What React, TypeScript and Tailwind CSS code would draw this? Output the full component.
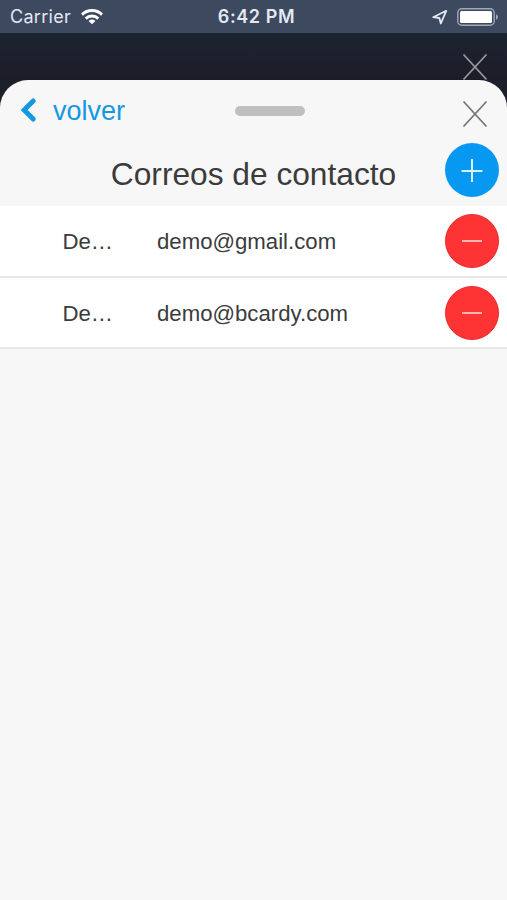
interface Contact {
  label: string;
  email: string;
}

const contacts: Contact[] = [
  { label: "De…", email: "demo@gmail.com" },
  { label: "De…", email: "demo@bcardy.com" },
];

function CloseIcon({ className }: { className: string }) {
  return (
    <svg viewBox="0 0 26 28" className={`h-7 w-[26px] ${className}`} fill="none" stroke="currentColor" strokeWidth="1.8">
      <path d="M1.5 1.5 24.5 26.5M24.5 1.5 1.5 26.5" />
    </svg>
  );
}

function StatusBar() {
  return (
    <header className="grid h-[33px] grid-cols-3 items-center bg-[#3c495f] pr-2 pl-[10px] font-['Inter',sans-serif] text-[#e3e8f2]">
      <div className="flex items-center gap-[10px]">
        <span className="pt-px text-[18px] leading-none tracking-[0.3px]">Carrier</span>
        <svg viewBox="0 0 22 17" className="h-[17px] w-[22px] text-white" fill="none" stroke="currentColor" strokeWidth="2.9">
          <path d="M1 6.6a14.3 14.3 0 0 1 20 0" />
          <path d="M4.7 10.6a9 9 0 0 1 12.6 0" />
          <path d="M11 16.2 7.6 12.9a4.9 4.9 0 0 1 6.8 0Z" fill="currentColor" stroke="none" />
        </svg>
      </div>
      <span className="pt-px pl-1 text-center text-[18px] leading-none font-semibold tracking-[0.6px] whitespace-nowrap">
        6:42 PM
      </span>
      <div className="flex items-center justify-end gap-[9px]">
        <svg viewBox="0 0 16 16" className="h-4 w-4" fill="none" stroke="currentColor" strokeWidth="1.8" strokeLinejoin="round">
          <path d="M14.2 1.8 1.2 8.2l6.2.8 1.4 5.5Z" />
        </svg>
        <svg viewBox="0 0 42 18" className="h-[18px] w-[42px]">
          <rect x="0.8" y="0.8" width="36.4" height="16.4" rx="4" fill="none" stroke="#a0a9b8" strokeWidth="1.4" />
          <rect x="3" y="3" width="32" height="12" rx="1.5" fill="#fff" />
          <path d="M39 6.2q2 .8 2 2.8t-2 2.8Z" fill="#a0a9b8" />
        </svg>
      </div>
    </header>
  );
}

function SheetHeader() {
  return (
    <div className="relative h-[126px]">
      <button className="absolute top-[15px] left-5 flex items-center gap-[15px] text-[#1598e2]">
        <svg
          viewBox="0 0 18 26"
          className="mb-[3px] h-[26px] w-[18px]"
          fill="none"
          stroke="currentColor"
          strokeWidth="5"
          strokeLinecap="round"
        >
          <path d="M13.2 4 4.2 13l9 9" />
        </svg>
        <span className="text-[27px] leading-8">volver</span>
      </button>
      <div className="absolute top-[26px] left-[235px] h-[10px] w-[70px] rounded-full bg-[#bfbfbf]" />
      <button className="absolute top-5 left-[462px] text-[#77777a]">
        <CloseIcon className="block" />
      </button>
      <h1 className="absolute top-[74px] w-full text-center text-[31.7px] leading-10">Correos de contacto</h1>
      <button className="absolute top-[63px] right-2 flex size-[54px] items-center justify-center rounded-full bg-[#0799f2] text-[#d9f0ff]">
        <svg viewBox="0 0 24 24" className="size-6" fill="none" stroke="currentColor" strokeWidth="2">
          <path d="M12 1v23M1.5 13h21" />
        </svg>
      </button>
    </div>
  );
}

function ContactRow({ label, email }: Contact) {
  return (
    <li className="flex h-[71.5px] items-center border-b-2 border-[#e7e7e7] bg-white pt-px pr-2 pl-[62.5px] text-[22.2px] leading-none">
      <span className="w-[94.5px] pt-[2px]">{label}</span>
      <span className="flex-1 pt-[2px]">{email}</span>
      <button className="flex size-[54px] items-center justify-center rounded-full border-[1.5px] border-[#e92a30] bg-[#fe3434] text-[#ffb9b4]">
        <svg viewBox="0 0 22 4" className="h-1 w-[22px]" fill="none" stroke="currentColor" strokeWidth="2">
          <path d="M1 2h20" />
        </svg>
      </button>
    </li>
  );
}

export default function App() {
  return (
    <div className="flex h-[900px] w-[507px] flex-col overflow-hidden bg-[#1b202b] font-['Liberation_Sans',Arial,sans-serif] text-[#3b3b3d]">
      <StatusBar />
      <div className="flex h-[47px] shrink-0 items-end bg-gradient-to-b from-[#1b2430] to-[#1d1d29] pl-[462px] text-[#96999f]">
        <CloseIcon className="-mb-px shrink-0" />
      </div>
      <main className="relative z-10 flex-1 rounded-t-[28px] bg-[#f7f7f7]">
        <SheetHeader />
        <ul>
          {contacts.map((contact) => (
            <ContactRow key={contact.email} {...contact} />
          ))}
        </ul>
      </main>
    </div>
  );
}
